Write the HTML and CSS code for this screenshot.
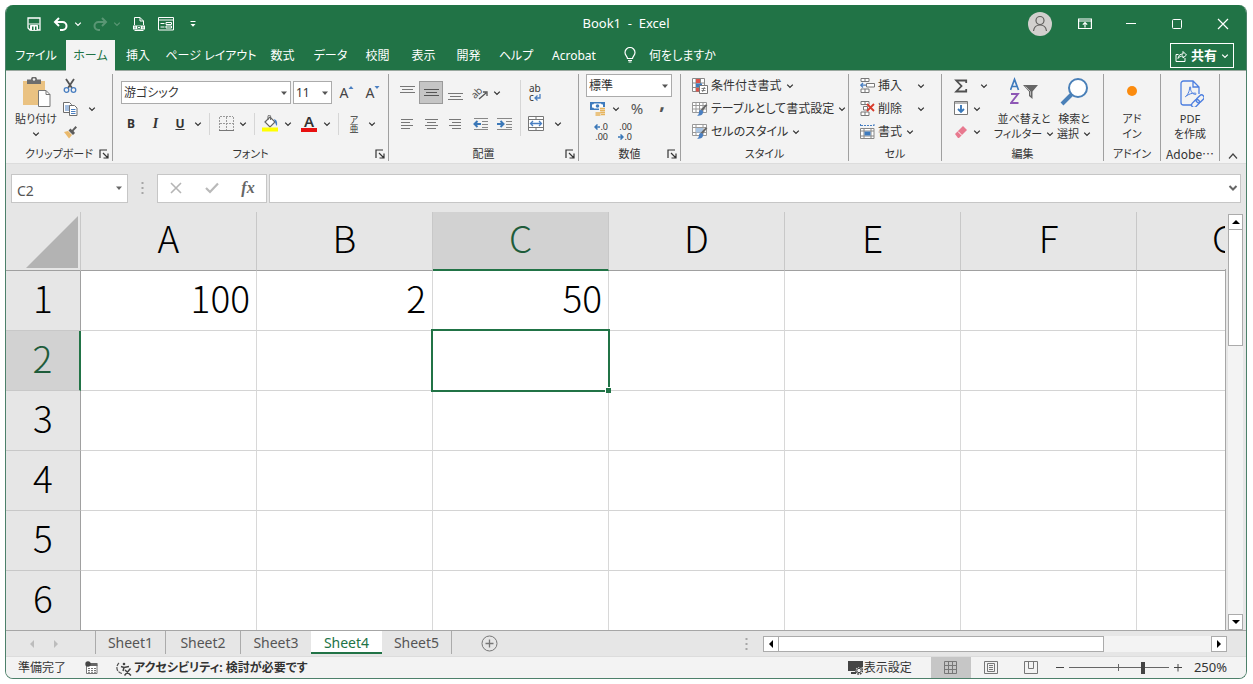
FILE: index.html
```html
<!DOCTYPE html>
<html lang="ja">
<head>
<meta charset="utf-8">
<title>Book1 - Excel</title>
<link rel="stylesheet" href="styles.css">
</head>
<body>
<svg class="defs" aria-hidden="true">
  <symbol id="chev" viewBox="0 0 8 8"><path d="M1.2 2.6 4 5.4 6.800 2.6" fill="none" stroke="currentColor" stroke-width="1.3"/></symbol>
  <symbol id="caret" viewBox="0 0 8 8"><path d="M1 2.500h6L4 6z" fill="currentColor"/></symbol>
  <symbol id="launch" viewBox="0 0 10 10"><path d="M1 9V1h7M4 4l5 5M9 4.500V9H4.500" fill="none" stroke="currentColor" stroke-width="1.200"/></symbol>
</svg>
<div class="window">
  <header class="titlebar">
    <div class="qat">
      <button class="q" aria-label="上書き保存"><svg width="14" height="14" viewBox="0 0 14 14"><path d="M1 1h12v12H3l-2-2z" fill="none" stroke="#fff" stroke-width="1.300"/><path d="M1.500 7h11M3.500 8.500h7V13h-7z" fill="#fff" stroke="#fff"/><path d="M5 9.500h1.500V13H5zM8 9.500h1.500V13H8z" fill="#217346"/></svg></button>
      <span class="pair">
        <button class="q" aria-label="元に戻す"><svg width="16" height="14" viewBox="0 0 16 14"><path d="M2 5h7.500a4 4 0 0 1 0 8H7M6 1 2 5l4 4" fill="none" stroke="#fff" stroke-width="2"/></svg></button>
        <button class="d" aria-label="元に戻す一覧"><svg width="8" height="8"><use href="#chev"/></svg></button>
      </span>
      <span class="pair dim">
        <button class="q" aria-label="やり直し"><svg width="16" height="14" viewBox="0 0 16 14"><path d="M14 5H6.500a4 4 0 0 0 0 8H8M10 1l4 4-4 4" fill="none" stroke="currentColor" stroke-width="2"/></svg></button>
        <button class="d" aria-label="やり直し一覧"><svg width="8" height="8"><use href="#chev"/></svg></button>
      </span>
      <button class="q" aria-label="PDF"><svg width="14" height="16" viewBox="0 0 14 16"><path d="M2.500 9V1.500H8L11.500 5v4M8 1.500V5h3.500M2.500 14.500h9" fill="none" stroke="#fff"/><path d="M1 9.500h12v4H1z" fill="#fff"/><path d="M3 10.500v2M5.500 10.500h3v2h-3zM11 10.500v2" stroke="#217346" fill="none" stroke-width=".8"/></svg></button>
      <button class="q" aria-label="フォーム"><svg width="16" height="14" viewBox="0 0 16 14"><path d="M.5.500h15v12.500H.5zM.5 3h15M8 5.500h5.500v2H8zM8 9h5.500v2H8zM2.500 6.500h4M2.500 10h4" fill="none" stroke="#fff"/></svg></button>
      <button class="q" aria-label="クイック アクセス ツール バーのユーザー設定"><svg width="8" height="8" viewBox="0 0 8 8"><path d="M1.500 1.500h5" stroke="#fff"/><path d="M1.500 4h5L4 6.800z" fill="#fff"/></svg></button>
    </div>
    <h1>Book1&nbsp; -&nbsp; Excel</h1>
    <div class="sys">
      <button class="avatar" aria-label="アカウント"><svg width="24" height="24" viewBox="0 0 24 24"><circle cx="12" cy="12" r="12" fill="#d2d0ce"/><circle cx="12" cy="8.500" r="4" fill="none" stroke="#605e5c" stroke-width="1.200"/><path d="M5.500 19c.5-4 3-6 6.500-6s6 2 6.500 6" fill="none" stroke="#605e5c" stroke-width="1.200"/></svg></button>
      <button class="s" aria-label="リボンの表示オプション"><svg width="14" height="12" viewBox="0 0 14 12"><path d="M.6 1h12.800v9.500H.6zM.6 3h12.800M7 9.500v-5M4.800 6.700 7 4.500l2.200 2.200" fill="none" stroke="#fff" stroke-width="1.200"/></svg></button>
      <button class="s" aria-label="最小化"><svg width="12" height="12"><path d="M1 5.500h10" stroke="#fff"/></svg></button>
      <button class="s" aria-label="最大化"><svg width="12" height="12"><rect x="1.500" y="1.500" width="9" height="9" rx="1" fill="none" stroke="#fff"/></svg></button>
      <button class="s" aria-label="閉じる"><svg width="12" height="12"><path d="m1 1 10 10M11 1 1 11" stroke="#fff" stroke-width="1.200"/></svg></button>
    </div>
  </header>

  <nav class="tabs">
    <div class="tablist">
      <button>ファイル</button><button class="on">ホーム</button><button>挿入</button><button>ページ レイアウト</button><button>数式</button><button>データ</button><button>校閲</button><button>表示</button><button>開発</button><button>ヘルプ</button><button>Acrobat</button>
    </div>
    <button class="tell"><svg width="12" height="16" viewBox="0 0 12 16"><path d="M3.500 11.500c0-2-2.500-3-2.500-6a5 5 0 0 1 10 0c0 3-2.500 4-2.500 6zM4 13.500h4M4.500 15h3" fill="none" stroke="#fff" stroke-width="1.200"/></svg>何をしますか</button>
    <button class="share"><svg width="12" height="12" viewBox="0 0 12 12"><path d="M3.500 4.500H1v7h9V8M3 8.500c.3-3 2-4.500 5-4.500V1.500L11.500 5 8 8V6C6 6 4 6.500 3 8.500z" fill="none" stroke="#fff"/></svg><b>共有</b><svg width="8" height="8"><use href="#chev"/></svg></button>
  </nav>

  <section class="ribbon">
    <div class="group g-clip">
      <div class="body clip">
        <button class="big"><svg width="29" height="30" viewBox="0 0 29 30"><path d="M1 4h22v24H1z" fill="#eac282"/><path d="M5 2.500h4a3 3 0 0 1 6 0h4V7H5z" fill="#6d6d6d"/><circle cx="12" cy="2.500" r="1.200" fill="#f3f3f3"/><path d="M16.500 13.500H24l4 4v12H16.500z" fill="#fff" stroke="#777"/><path d="M24 13.500v4h4" fill="none" stroke="#777"/></svg><span>貼り付け</span><svg width="8" height="8"><use href="#chev"/></svg></button>
        <div class="three">
          <button aria-label="切り取り"><svg width="14" height="16" viewBox="0 0 14 16"><path d="m3 1 6 9M11 1 5 10" stroke="#555" stroke-width="1.800"/><circle cx="3.500" cy="12" r="2.300" fill="none" stroke="#4a7fc1" stroke-width="1.300"/><circle cx="10.500" cy="12" r="2.300" fill="none" stroke="#4a7fc1" stroke-width="1.300"/></svg></button>
          <button aria-label="コピー"><svg width="15" height="16" viewBox="0 0 15 16"><path d="M.5 1.500h6l2 2v8h-8z" fill="#fff" stroke="#6d6d6d"/><path d="M2 5h5M2 7h5M2 9h5" stroke="#4a7fc1"/><path d="M6.500 4.500h5l2.500 2.500v7.500H6.500z" fill="#fff" stroke="#6d6d6d"/><path d="M8 8.500h4.500M8 10.500h4.500M8 12.500h4.500" stroke="#4a7fc1"/></svg></button>
          <button aria-label="書式のコピー"><svg width="15" height="14" viewBox="0 0 15 14"><path d="m1 7 4-1 4 4-3 3.500z" fill="#eab96c"/><path d="m5.500 5.500 2-2 1.500 1.500L12.500 1l1.500 1.500L10.500 6l1.500 2-2 2z" fill="#5c5c5c"/></svg></button>
        </div>
        <button class="d" aria-label="コピーのオプション"><svg width="8" height="8"><use href="#chev"/></svg></button>
      </div>
      <div class="foot"><span>クリップボード</span><button aria-label="クリップボードの設定"><svg width="10" height="10"><use href="#launch"/></svg></button></div>
    </div>

    <div class="group g-font">
      <div class="body two">
        <div class="fontrow">
          <span class="combo face"><select aria-label="フォント"><option>游ゴシック</option></select><svg width="8" height="8"><use href="#caret"/></svg></span>
          <span class="combo size"><select aria-label="フォント サイズ"><option>11</option></select><svg width="8" height="8"><use href="#caret"/></svg></span>
          <button class="ab" aria-label="フォント サイズの拡大"><span>A</span><svg width="6" height="5"><path d="M.5 4 3 1l2.500 3" fill="#4a7fc1"/></svg></button>
          <button class="ab" aria-label="フォント サイズの縮小"><span>A</span><svg width="6" height="5"><path d="M.5 1 3 4l2.500-3" fill="#4a7fc1"/></svg></button>
        </div>
        <div class="fmtrow">
          <button class="bold">B</button><button class="ital">I</button><button class="undl">U</button><button class="d" aria-label="下線"><svg width="8" height="8"><use href="#chev"/></svg></button>
          <i class="vs"></i>
          <button aria-label="罫線"><svg width="15" height="15" viewBox="0 0 15 15"><path d="M1 .5h13M.5 1v13M14.500 1v13M7.500 1v13M1 7.500h13" stroke="#9a9a9a" stroke-dasharray="2 1"/><path d="M0 14.500h15" stroke="#777"/></svg></button><button class="d" aria-label="罫線一覧"><svg width="8" height="8"><use href="#chev"/></svg></button>
          <i class="vs"></i>
          <button aria-label="塗りつぶしの色"><svg width="17" height="17" viewBox="0 0 17 17"><path d="m3 7 5-5 5 5-5 5z" fill="#fff" stroke="#666" stroke-width="1.200"/><path d="M6 5V1.500a1.300 1.300 0 0 1 2.600 0V5" fill="none" stroke="#666"/><path d="M12 4c3 1 3.500 3 3 7-1.500-1-1.500-3-2-4z" fill="#4a7fc1"/><path d="M0 12.500h16v4H0z" fill="#ff0"/></svg></button><button class="d" aria-label="塗りつぶしの色一覧"><svg width="8" height="8"><use href="#chev"/></svg></button>
          <button class="color" aria-label="フォントの色">A</button><button class="d" aria-label="フォントの色一覧"><svg width="8" height="8"><use href="#chev"/></svg></button>
          <i class="vs"></i>
          <button class="ruby" aria-label="ふりがな"><span>ア</span><span>亜</span></button><button class="d" aria-label="ふりがな一覧"><svg width="8" height="8"><use href="#chev"/></svg></button>
        </div>
      </div>
      <div class="foot"><span>フォント</span><button aria-label="フォントの設定"><svg width="10" height="10"><use href="#launch"/></svg></button></div>
    </div>

    <div class="group g-align">
      <div class="body align">
        <button aria-label="上揃え"><svg width="15" height="16"><path d="M0 1.500h15M2 4.500h11M0 7.500h15" stroke="#777"/></svg></button>
        <button class="sel" aria-label="上下中央揃え"><svg width="15" height="16"><path d="M0 4.500h15M2 7.500h11M0 10.500h15" stroke="#555"/></svg></button>
        <button aria-label="下揃え"><svg width="15" height="16"><path d="M0 8.500h15M2 11.500h11M0 14.500h15" stroke="#777"/></svg></button>
        <button aria-label="方向"><svg class="slant" width="17" height="16" viewBox="0 0 17 16"><text x="-1" y="11" font-size="10" fill="#555" transform="rotate(-45 5 8)">ab</text><path d="m7 14 7-6M11 7h4v4" fill="none" stroke="#555" stroke-width="1.300"/></svg></button>
        <button class="start" aria-label="方向一覧"><svg width="8" height="8"><use href="#chev"/></svg></button>
        <i class="vs tall"></i>
        <button class="wrap" aria-label="折り返して全体を表示する"><span>ab</span><span>c<svg width="7" height="7" viewBox="0 0 7 7"><path d="M6 0v4H1M3.500 1.500 1 4l2.500 2.500" fill="none" stroke="#4a7fc1" stroke-width="1.300"/></svg></span></button>
        <span></span>
        <button aria-label="左揃え"><svg width="12" height="12"><path d="M0 1.500h12M0 4.500h9M0 7.500h12M0 10.500h9" stroke="#777"/></svg></button>
        <button aria-label="中央揃え"><svg width="13" height="12"><path d="M0 1.500h13M2 4.500h9M0 7.500h13M2 10.500h9" stroke="#777"/></svg></button>
        <button aria-label="右揃え"><svg width="12" height="12"><path d="M0 1.500h12M3 4.500h9M0 7.500h12M3 10.500h9" stroke="#777"/></svg></button>
        <button aria-label="インデントを減らす"><svg width="15" height="14"><path d="M1 1.500h14M9 4.500h6M9 7.500h6M9 10.500h6M1 12.500h14" stroke="#888"/><path d="M8 7H2M4.500 4l-3 3 3 3" fill="none" stroke="#3b78b8" stroke-width="2"/></svg></button>
        <button aria-label="インデントを増やす"><svg width="15" height="14"><path d="M0 1.500h15M9 4.500h6M9 7.500h6M9 10.500h6M0 12.500h15" stroke="#888"/><path d="M0 7h6M3.500 4l3 3-3 3" fill="none" stroke="#3b78b8" stroke-width="2"/></svg></button>
        <button aria-label="セルを結合して中央揃え"><svg width="16" height="15"><path d="M.5.500h15v14H.5zM.5 3.500h15M.5 11.500h15M8 .5v3M8 11.500v3" fill="#fff" stroke="#777"/><path d="M3 7.500h10M5 5 2.500 7.500 5 10M11 5l2.500 2.500L11 10" fill="none" stroke="#4a7fc1" stroke-width="1.300"/></svg></button>
        <button class="d" aria-label="セルの結合一覧"><svg width="8" height="8"><use href="#chev"/></svg></button>
      </div>
      <div class="foot"><span>配置</span><button aria-label="配置の設定"><svg width="10" height="10"><use href="#launch"/></svg></button></div>
    </div>

    <div class="group g-num">
      <div class="body three num">
        <span class="combo"><select aria-label="表示形式"><option>標準</option></select><svg width="8" height="8"><use href="#caret"/></svg></span>
        <div class="numrow">
          <button aria-label="通貨表示形式"><svg width="16" height="16" viewBox="0 0 16 16"><path d="M0 1h15v8H0z" fill="#3f7bbd"/><path d="M2 3.500q2 0 2-1h7q0 1 2 1v3q-2 0-2 1H4q0-1-2-1z" fill="#fff"/><circle cx="7.500" cy="5" r="1.800" fill="#3f7bbd"/><path d="M9 6h6v9H5v-4h4z" fill="#f3f3f3"/><path d="M10 7.500h5M10 9.500h5M5.500 12h5M5.500 14h5M10.500 11.500h4.500M11 13.500h4" stroke="#e7b45c" stroke-width="1.300"/></svg></button>
          <button class="d" aria-label="通貨一覧"><svg width="8" height="8"><use href="#chev"/></svg></button>
          <button class="pct">%</button><button class="comma" aria-label="桁区切りスタイル">,</button>
        </div>
        <div class="numrow">
          <button class="dec" aria-label="小数点以下の表示桁数を増やす"><span><svg width="6" height="6"><path d="M6 3H1M3.500.5 1 3l2.500 2.500" fill="none" stroke="#3b78b8" stroke-width="1.500"/></svg>.0</span><span>.00</span></button>
          <button class="dec wide" aria-label="小数点以下の表示桁数を減らす"><span>.00</span><span><svg width="6" height="6"><path d="M0 3h5M2.500.5 5 3 2.500 5.500" fill="none" stroke="#3b78b8" stroke-width="1.500"/></svg>.0</span></button>
        </div>
      </div>
      <div class="foot"><span>数値</span><button aria-label="数値の設定"><svg width="10" height="10"><use href="#launch"/></svg></button></div>
    </div>

    <div class="group g-style">
      <div class="body three list">
        <button><svg width="16" height="16" viewBox="0 0 16 16"><path d="M.5.500h12v13H.5zM.5 5h12M.5 9.500h12M4 .5v13M8.500.5v13" fill="#fff" stroke="#888"/><path d="M4 1h4v4H4z" fill="#d9534a"/><path d="M4 5.500h6v3.500H4z" fill="#3f7bbd"/><path d="M4 10h4v3.500H4z" fill="#d9534a"/><path d="M7.500 7.500h8v8h-8z" fill="#fff" stroke="#777"/><path d="M9.500 10.500h4M9.500 12.500h4M12.500 9l-2 5" stroke="#666" stroke-width=".8"/></svg>条件付き書式<svg width="8" height="8"><use href="#chev"/></svg></button>
        <button><svg width="16" height="16" viewBox="0 0 16 16"><path d="M.5 1.500h14v10H.5zM.5 4.500h14M.5 8h14M4 1.500v10M7.500 1.500v10M11 1.500v10" fill="#fff" stroke="#999"/><path d="m15.500 4-5 6-2-1 5-5.500z" fill="#666"/><path d="M9.500 9c2 .5 2 2.500 1 4s-3 2-5.500 1.500c1.500-.5 2-2 2-3.500s1-2 2.500-2z" fill="#4a7fc1"/></svg>テーブルとして書式設定<svg width="8" height="8"><use href="#chev"/></svg></button>
        <button><svg width="16" height="16" viewBox="0 0 16 16"><path d="M.5.500h14v11H.5zM.5 3.500h14M.5 8.500h14M4 .5v11M11 .5v11" fill="#fff" stroke="#999"/><path d="M4 4h7v4.500H4z" fill="#a9c4e2"/><path d="m15.500 4-5 6-2-1 5-5.500z" fill="#666"/><path d="M9.500 9c2 .5 2 2.500 1 4s-3 2-5.500 1.500c1.500-.5 2-2 2-3.500s1-2 2.500-2z" fill="#4a7fc1"/></svg>セルのスタイル<svg width="8" height="8"><use href="#chev"/></svg></button>
      </div>
      <div class="foot"><span>スタイル</span></div>
    </div>

    <div class="group g-cell">
      <div class="body three list">
        <button class="spread"><svg width="15" height="15" viewBox="0 0 15 15"><path d="M1 .5h8v3H1zM5 .5v3M1 11h8v3.500H1zM5 11v3.500M6.500 5.500h8v3.500h-8z" fill="#fff" stroke="#777"/><path d="M6 7.200H1M3 5 .8 7.200 3 9.500" fill="none" stroke="#4a7fc1" stroke-width="1.300"/></svg>挿入<svg width="8" height="8"><use href="#chev"/></svg></button>
        <button class="spread"><svg width="15" height="15" viewBox="0 0 15 15"><path d="M1 .5h8v3H1zM5 .5v3M1 11h8v3.500H1zM5 11v3.500M3.500 5.500h4v3.500h-4z" fill="#fff" stroke="#777"/><path d="m7 3 7 7M14 3l-7 7" stroke="#d83b2b" stroke-width="1.800"/></svg>削除<svg width="8" height="8"><use href="#chev"/></svg></button>
        <button><svg width="15" height="16" viewBox="0 0 15 16"><path d="M.5 0v3M14 0v3M1 1.500h13" stroke="#4a7fc1" stroke-dasharray="2 1"/><path d="M.5 4.500H14v10H.5zM.5 7H14M.5 12H14M4 4.500v10M11 4.500v10" fill="#fff" stroke="#888"/><path d="M4.500 7.500h6v4h-6z" fill="#3f7bbd"/></svg>書式<svg width="8" height="8"><use href="#chev"/></svg></button>
      </div>
      <div class="foot"><span>セル</span></div>
    </div>

    <div class="group g-edit">
      <div class="body edit">
        <div class="three sums">
          <button class="far" aria-label="オート SUM"><svg width="14" height="14" viewBox="0 0 14 14"><path d="M12.200 4V1.500H2.200L7.500 7l-5.300 5.500h10V10" fill="none" stroke="#505050" stroke-width="1.800"/></svg><svg width="8" height="8"><use href="#chev"/></svg></button>
          <button aria-label="フィル"><svg width="14" height="15" viewBox="0 0 14 15"><path d="M.5.500h13v13H.5z" fill="#fff" stroke="#777"/><path d="M.5 2h13" stroke="#777"/><path d="M7 4v7M4 8l3 3 3-3" fill="none" stroke="#3b78b8" stroke-width="1.900"/></svg><svg width="8" height="8"><use href="#chev"/></svg></button>
          <button aria-label="クリア"><svg width="14" height="14" viewBox="0 0 14 14"><path d="m1 9 8-8 4 4-8 8H4z" fill="#e8798f"/><path d="m4 6.500 4 4" stroke="#fff"/></svg><svg width="8" height="8"><use href="#chev"/></svg></button>
        </div>
        <button class="big"><svg width="28" height="30" viewBox="0 0 28 30"><path d="m.5 13 4-10.500 4 10.500M2 9.500h5" fill="none" stroke="#3f7bbd" stroke-width="1.700"/><path d="M1 17h7L1 26h7.500" fill="none" stroke="#8e57b5" stroke-width="1.800"/><path d="M13 8h15l-5.500 6.500V22L19 19v-4.500z" fill="#666"/><path d="m15.500 9.500 5 5v4" fill="none" stroke="#bbb"/></svg><span>並べ替えと</span><span>フィルター<svg width="8" height="8"><use href="#chev"/></svg></span></button>
        <button class="big"><svg width="29" height="30" viewBox="0 0 29 30"><circle cx="18" cy="11" r="9" fill="#fff" stroke="#4a80b8" stroke-width="2"/><path d="M11.500 17.500 2 27" stroke="#4a80b8" stroke-width="4"/></svg><span>検索と</span><span>選択<svg width="8" height="8"><use href="#chev"/></svg></span></button>
      </div>
      <div class="foot"><span>編集</span></div>
    </div>

    <div class="group g-addin">
      <div class="body solo"><button class="big"><svg width="28" height="30" viewBox="0 0 28 30"><circle cx="14" cy="14" r="5" fill="#fb8b0e"/></svg><span>アド</span><span>イン</span></button></div>
      <div class="foot"><span>アドイン</span></div>
    </div>

    <div class="group g-pdf">
      <div class="body solo"><button class="big"><svg width="28" height="30" viewBox="0 0 28 30"><path d="M15 28H7.500A2.500 2.500 0 0 1 5 25.500v-19A2.500 2.500 0 0 1 7.500 4H17l6 6v7M17 4v6h6" fill="none" stroke="#4d7fe0" stroke-width="1.300"/><path d="M9 20c2-1 5-6 4.500-9.500 0-1 1.500-1 1.200.5C14 14 17 17.500 19.500 17.500c1 0 .8-1.400-.5-1.400-3.500 0-6 1-9 3" fill="none" stroke="#4d7fe0"/><g fill="none" stroke="#4d7fe0" stroke-width="1.400" transform="rotate(-45 22 24)"><rect x="14" y="21.500" width="9" height="5" rx="2.500"/><rect x="20.500" y="21.500" width="9" height="5" rx="2.500"/></g></svg><span>PDF</span><span>を作成</span></button></div>
      <div class="foot"><span>Adobe…</span></div>
    </div>
    <button class="collapse" aria-label="リボンを折りたたむ"><svg width="10" height="8"><path d="M1 6.500 5 2l4 4.500" fill="none" stroke="#444" stroke-width="1.200"/></svg></button>
  </section>

  <section class="formula">
    <span class="namebox"><input type="text" value="C2" aria-label="名前ボックス"><svg width="8" height="8"><use href="#caret"/></svg></span>
    <svg class="dots" width="3" height="12"><path d="M1.500 0v12" stroke="#a6a6a6" stroke-width="2" stroke-dasharray="2 3"/></svg>
    <div class="fx">
      <button aria-label="キャンセル"><svg width="12" height="12"><path d="m1 1 10 10M11 1 1 11" stroke="#b5b5b5" stroke-width="1.600"/></svg></button>
      <button aria-label="入力"><svg width="14" height="12"><path d="m1 6 4 4 8-8.500" fill="none" stroke="#b9b9b9" stroke-width="2.200"/></svg></button>
      <button class="fn" aria-label="関数の挿入">fx</button>
    </div>
    <span class="bar"><input type="text" aria-label="数式バー"><svg width="10" height="8"><path d="M1.500 2 5 5.500 8.500 2" fill="none" stroke="#666" stroke-width="2"/></svg></span>
  </section>

  <main class="sheet">
    <div class="viewport">
      <table>
        <colgroup><col class="rh"><col><col><col><col><col><col><col></colgroup>
        <thead><tr><th class="corner"><svg width="52" height="52"><path d="M52 0v52H0z" fill="#b3b3b3"/></svg></th><th>A</th><th>B</th><th class="on">C</th><th>D</th><th>E</th><th>F</th><th>G</th></tr></thead>
        <tbody>
          <tr><th>1</th><td>100</td><td>2</td><td>50</td><td></td><td></td><td></td><td></td></tr>
          <tr><th class="on">2</th><td></td><td></td><td class="active"><span class="cursor"></span></td><td></td><td></td><td></td><td></td></tr>
          <tr><th>3</th><td></td><td></td><td></td><td></td><td></td><td></td><td></td></tr>
          <tr><th>4</th><td></td><td></td><td></td><td></td><td></td><td></td><td></td></tr>
          <tr><th>5</th><td></td><td></td><td></td><td></td><td></td><td></td><td></td></tr>
          <tr><th>6</th><td></td><td></td><td></td><td></td><td></td><td></td><td></td></tr>
        </tbody>
      </table>
    </div>
    <div class="vscroll">
      <button aria-label="上へ"><svg width="8" height="6"><path d="M0 5h8L4 1z"/></svg></button>
      <div class="thumb"></div>
      <button class="end" aria-label="下へ"><svg width="8" height="6"><path d="M0 1h8L4 5z"/></svg></button>
    </div>
  </main>

  <div class="sheetbar">
    <div class="navs"><button aria-label="前のシート"><svg width="5" height="8"><path d="M5 0v8L1 4z" fill="#bcbcbc"/></svg></button><button aria-label="次のシート"><svg width="5" height="8"><path d="M0 0v8l4-4z" fill="#bcbcbc"/></svg></button></div>
    <div class="sheets"><button>Sheet1</button><button>Sheet2</button><button>Sheet3</button><button class="on">Sheet4</button><button>Sheet5</button></div>
    <button class="add" aria-label="新しいシート"><svg width="17" height="17"><circle cx="8.500" cy="8.500" r="7.500" fill="none" stroke="#777"/><path d="M8.500 4.500v8M4.500 8.500h8" stroke="#777" stroke-width="1.300"/></svg></button>
    <svg class="grip" width="3" height="12"><path d="M1.500 0v12" stroke="#a6a6a6" stroke-width="2" stroke-dasharray="2 3"/></svg>
    <div class="hscroll">
      <button aria-label="左へ"><svg width="6" height="8"><path d="M5 0v8L1 4z"/></svg></button>
      <div class="thumb"></div>
      <button class="end" aria-label="右へ"><svg width="6" height="8"><path d="M1 0v8l4-4z"/></svg></button>
    </div>
  </div>

  <footer class="status">
    <span>準備完了</span>
    <button class="macro" aria-label="マクロの記録"><svg width="13" height="13" viewBox="0 0 13 13"><path d="M1.500 3.500h10.500v9H1.500z" fill="#fff" stroke="#777"/><path d="M5 2h7.500v3H5z" fill="#666"/><circle cx="3" cy="3" r="2.700" fill="#444"/><path d="M3 7.500h8M3 9.500h8M3 11.300h8" stroke="#777" stroke-dasharray="2 1"/></svg></button>
    <button class="a11y"><svg width="17" height="16" viewBox="0 0 17 16"><path d="M6 13.500A6 6 0 0 1 3 3" fill="none" stroke="#555" stroke-width="1.200" stroke-dasharray="4 1"/><path d="M5 6.500 8 7.500l5-1M8 7.500 7 11M9 10l6 5.500M14.500 8.500l-6 7" fill="none" stroke="#444" stroke-width="1.500"/><circle cx="8" cy="4" r="1.300" fill="#444"/></svg><b>アクセシビリティ: 検討が必要です</b></button>
    <div class="right">
      <button class="disp"><svg width="15" height="15" viewBox="0 0 15 15"><path d="M0 1h15v6l-7 4H0zM3 12h5v2H3z" fill="#444"/><circle cx="11" cy="10.500" r="3.500" fill="#f3f3f3" stroke="#444" stroke-width="1.500" stroke-dasharray="1.800 .9"/><circle cx="11" cy="10.500" r="2.200" fill="#f3f3f3" stroke="#444"/></svg>表示設定</button>
      <button class="view on" aria-label="標準"><svg width="13" height="13"><path d="M.5.500h12v12H.5zM.5 4.500h12M.5 8.500h12M4.500.5v12M8.500.5v12" fill="none" stroke="#777"/></svg></button>
      <button class="view" aria-label="ページ レイアウト"><svg width="14" height="13"><path d="M.5.500h13v12H.5zM3.500 2.500h7v8h-7zM5 4.500h4M5 6.500h4M5 8.500h4" fill="none" stroke="#777"/></svg></button>
      <button class="view" aria-label="改ページ プレビュー"><svg width="14" height="13"><path d="M.5.500h13v12H.5zM4.500.5v7M9.500.5v7M4.500 7.500h5" fill="none" stroke="#777"/></svg></button>
      <button class="pm" aria-label="縮小"><svg width="8" height="8"><path d="M0 3.500h8" stroke="#444"/></svg></button>
      <input type="range" min="0" max="100" value="75" aria-label="ズーム">
      <button class="pm" aria-label="拡大"><svg width="8" height="8"><path d="M0 3.500h8M4 0v7.500" stroke="#444"/></svg></button>
      <span class="zoom">250%</span>
    </div>
  </footer>
</div>
</body>
</html>
```
FILE: styles.css
```css
* { box-sizing: border-box; }
html, body { margin: 0; height: 100%; }
body {
  padding: 5px 6px 5px 5px;
  background: #fff;
  font: 12px/15px "Noto Sans", "Noto Sans CJK JP", sans-serif;
  font-feature-settings: "palt";
  color: #333;
}
.defs { position: absolute; width: 0; height: 0; }
button {
  display: flex; align-items: center; justify-content: center;
  margin: 0; padding: 0; border: 0; background: none;
  font: inherit; font-feature-settings: inherit; color: inherit; white-space: nowrap;
}
input, select { font: inherit; color: inherit; border-radius: 0; margin: 0; }
svg { flex: none; display: block; }

.window {
  display: flex; flex-direction: column; height: 100%;
  border: 1px solid #4d806a; border-top: 0; border-radius: 8px; overflow: hidden;
  background: #e6e6e6;
}

/* title bar */
.titlebar { display: grid; grid-template-columns: 1fr auto 1fr; height: 35px; background: #217346; color: #fff; }
.qat { display: flex; align-items: center; gap: 7px; padding-left: 18px; }
.q { width: 20px; height: 24px; }
.d { width: 10px; height: 20px; justify-self: center; align-self: center; }
.pair { display: flex; align-items: center; gap: 2px; }
.dim { color: #5a9674; }
h1 { margin: 0; font-size: 13px; font-weight: 400; line-height: 37px; }
.sys { display: flex; justify-content: flex-end; align-items: center; }
.avatar { margin-right: 10px; }
.s { width: 46px; height: 32px; }

/* ribbon tabs */
.tabs { display: flex; align-items: stretch; height: 31px; background: #217346; color: #fff; border-bottom: 1px solid #9aa89f; }
.tablist { display: grid; grid-template-columns: 60px 49px 46px 100px 43px 53px 41px 51px 39px 56px 60px; }
.tablist .on { background: #f3f3f3; color: #217346; margin-bottom: -1px; }
.tell { gap: 13px; margin-left: 20px; }
.share { margin: 3px 12px 2px auto; padding: 0 4px; gap: 4px; border: 1px solid #fff; font-size: 13px; }

/* ribbon */
.ribbon { display: flex; height: 93px; padding-top: 3px; background: #f3f3f3; border-bottom: 1px solid #dcdcdc; color: #333; }
.group { display: flex; flex-direction: column; flex: none; border-right: 1px solid #a0a0a0; margin-bottom: 2px; }
.g-clip { width: 107px; } .g-font { width: 276px; } .g-align { width: 190px; } .g-num { width: 102px; }
.g-style { width: 168px; } .g-cell { width: 93px; } .g-edit { width: 162px; } .g-addin { width: 57px; } .g-pdf { width: 59px; }
.body { flex: none; height: 72px; }
.foot { display: grid; grid-template-columns: 16px 1fr 16px; height: 16px; align-items: center; text-align: center; white-space: nowrap; font-size: 11px; }
.foot span { grid-column: 2; justify-self: center; }
.g-addin .foot, .g-pdf .foot { grid-template-columns: 0 1fr 0; }
.g-pdf .foot { font-size: 12px; font-family: "Noto Sans CJK JP", sans-serif; }
.three { display: grid; grid-template-rows: 23px 23px 23px; align-items: center; }
.big { flex-direction: column; justify-content: flex-start; padding-top: 3px; font-size: 11px; }
.big > svg:first-child { margin-bottom: 4px; }
.big span { display: flex; align-items: center; gap: 4px; line-height: 15px; }
.clip { display: grid; grid-template-columns: 44px 22px 14px; padding-left: 8px; column-gap: 1px; }
.clip .d { width: 14px; height: 69px; align-self: start; margin-left: 6px; }
.clip .big > svg:last-child { margin-top: 4px; }
.solo { display: grid; justify-content: center; }
.vs { width: 1px; height: 22px; background: #d6d6d6; justify-self: center; align-self: center; }

.two { display: grid; grid-template-rows: 31px 31px; padding-top: 3px; }
.fontrow { display: flex; align-items: center; gap: 2px; padding-left: 8px; }
.combo { position: relative; display: block; height: 23px; background: #fff; }
.combo select { appearance: none; width: 100%; height: 100%; padding: 0 2px; border: 1px solid #ababab; background: none; font-feature-settings: "palt"; }
.combo svg { position: absolute; right: 3px; top: 8px; pointer-events: none; color: #555; }
.face { width: 170px; } .size { width: 39px; }
.ab { width: 22px; font-size: 14px; color: #444; margin-left: 2px; }
.ab svg { align-self: flex-start; }
.fmtrow { display: grid; align-items: center; padding-left: 6px; grid-template-columns: 24px 25px 24px 12px 11px 22px 12px 11px 20px 16px 26px 10px 12px 20px 16px; }
.bold { font-weight: 700; }
.ital { font-family: "Liberation Serif", serif; font-style: italic; font-weight: 700; font-size: 14px; }
.undl { font-weight: 700; text-decoration: underline; }
.color { justify-self: center; width: 16px; height: 17px; border-bottom: 4px solid #e81010; font-size: 15px; font-weight: 600; }
.ruby { flex-direction: column; font-size: 9px; line-height: 9px; }

.align { display: grid; grid-template-columns: 24px 24px 24px 26px 22px 10px 22px 22px; grid-template-rows: 31px 31px; padding: 3px 0 0 6px; align-items: center; }
.slant { overflow: visible; }
.sel { height: 23px; background: #c5c5c5; border: 1px solid #9a9a9a; }
.start { justify-content: flex-start; }
.tall { grid-row: 1 / 3; grid-column: 6; height: 56px; }
.wrap { flex-direction: column; align-items: flex-start; padding-left: 4px; font-size: 10px; line-height: 9px; }
.wrap span { display: flex; align-items: center; }

.num { padding: 0 8px 0 7px; }
.numrow { display: grid; grid-template-columns: 24px 12px 30px 20px; align-items: center; }
.pct { font-size: 15px; color: #555; }
.comma { font-size: 20px; font-weight: 700; line-height: 10px; padding-bottom: 14px; color: #555; }
.dec { flex-direction: column; align-items: flex-end; padding-right: 2px; font-size: 9px; line-height: 10px; }
.dec span { display: flex; align-items: center; }
.dec.wide { grid-column: 2 / 4; width: 24px; }

.list { padding-left: 11px; justify-items: start; }
.list button { gap: 3px; }
.list button svg:last-child { margin-left: 1px; }
.g-cell .list .spread svg:last-child { margin-left: 12px; }

.edit { display: grid; grid-template-columns: 50px 56px 44px; padding-left: 4px; justify-items: center; }
.sums { justify-self: start; padding-left: 8px; justify-items: start; }
.sums button { gap: 5px; }
.sums .far { gap: 12px; }
.collapse { margin: auto auto 3px; }

/* formula bar */
.formula { display: flex; align-items: center; height: 48px; padding: 0 5px; }
.namebox, .bar { position: relative; display: block; height: 29px; }
.namebox { width: 117px; }
.bar { flex: 1; margin-left: 2px; }
.namebox input, .bar input { width: 100%; height: 100%; border: 1px solid #c6c6c6; background: #fff; padding: 4px 5px 0; color: #555; font-size: 14px; }
.namebox svg, .bar svg { position: absolute; right: 5px; top: 10px; color: #666; }
.bar svg { right: 3px; }
.dots { margin: 0 13px; }
.fx { display: grid; grid-template-columns: 36px 36px 36px; height: 29px; border: 1px solid #c6c6c6; background: #fff; }
.fn { font: italic 700 16px "Liberation Serif", serif; color: #666; }

/* worksheet */
.sheet { display: flex; flex: 1; min-height: 0; border-bottom: 1px solid #a6a6a6; }
.viewport { flex: 1; min-width: 0; overflow: hidden; border-right: 1px solid #a6a6a6; border-image: linear-gradient(#e6e6e6 58px, #a6a6a6 58px) 1; background: linear-gradient(#e6e6e6 58px, #fff 58px); }
table { border-collapse: separate; border-spacing: 0; table-layout: fixed; width: 1307px; font: 37px/40px "Noto Sans CJK JP", sans-serif; font-weight: 300; color: #000; }
col { width: 176px; } .rh { width: 75px; }
th { padding: 0 0 8px; font-weight: 300; background: #e6e6e6; border-right: 1px solid #c8c8c8; border-bottom: 1px solid #c8c8c8; }
thead th { height: 59px; border-bottom-color: #a0a0a0; }
tbody th { border-right-color: #a0a0a0; }
tbody th, td { height: 60px; }
td { padding: 0 6px 8px; text-align: right; background: #fff; border-right: 1px solid #d8d8d8; border-bottom: 1px solid #d4d4d4; }
th.on { background: #d2d2d2; color: #1e5c3a; }
thead .on { border-bottom: 2px solid #217346; }
tbody .on { border-right: 2px solid #217346; }
.corner { padding: 3px 2px 2px 0; }
.corner svg { margin-left: auto; }
.active { position: relative; }
.cursor { position: absolute; inset: -2px; border: 2px solid #217346; }
.cursor::after { content: ""; position: absolute; right: -3px; bottom: -3px; width: 5px; height: 5px; background: #217346; border: solid #fff; border-width: 1px 0 0 1px; }
.vscroll { display: flex; flex-direction: column; width: 15px; margin: 2px 3px 0 2px; background: #f3f3f3; }
.vscroll button { height: 16px; background: #fff; border: 1px solid #ababab; }
.vscroll .thumb { flex: 0 0 28%; background: #fff; border: 1px solid #ababab; border-top: 0; }
.vscroll .end { margin-top: auto; }

/* sheet tabs */
.sheetbar { display: flex; align-items: center; height: 25px; padding-right: 19px; }
.navs { display: flex; gap: 20px; padding: 0 36px 0 23px; }
.sheets { display: grid; grid-template-columns: 70px 75px 71px 71px 70px; align-self: stretch; height: 23px; font-size: 14px; color: #555; }
.sheets button { border-left: 1px solid #ababab; }
.sheets button:last-child { border-right: 1px solid #ababab; border-left: 0; }
.sheets .on { background: #fff; color: #217346; border: 0; border-bottom: 2px solid #217346; padding-top: 2px; }
.add { margin-left: 29px; }
.grip { margin: 0 15px 0 auto; }
.hscroll { display: flex; width: 38%; height: 16px; background: #f3f3f3; }
.hscroll button { width: 16px; background: #fff; border: 1px solid #ababab; }
.hscroll .thumb { flex: 0 0 70%; background: #fff; border: 1px solid #ababab; border-left: 0; }
.hscroll .end { margin-left: auto; }

/* status bar */
.status { display: flex; align-items: center; height: 22px; padding: 0 19px 0 12px; background: #f3f3f3; border-top: 1px solid #dcdcdc; white-space: nowrap; }
.macro { margin: 0 18px 0 19px; }
.a11y { gap: 1px; }
.right { display: flex; align-items: center; align-self: stretch; margin-left: auto; }
.disp { gap: 1px; margin-right: 19px; }
.view { width: 40px; align-self: stretch; }
.view.on { background: #c6c6c6; }
.pm { width: 18px; align-self: stretch; }
input[type=range] { appearance: none; width: 100px; height: 12px; background: linear-gradient(#666, #666) center / 100% 1px no-repeat, linear-gradient(#666, #666) center / 1px 7px no-repeat; }
input[type=range]::-webkit-slider-thumb { appearance: none; width: 4px; height: 12px; background: #444; }
.zoom { margin-left: 7px; font-size: 13px; }
```
